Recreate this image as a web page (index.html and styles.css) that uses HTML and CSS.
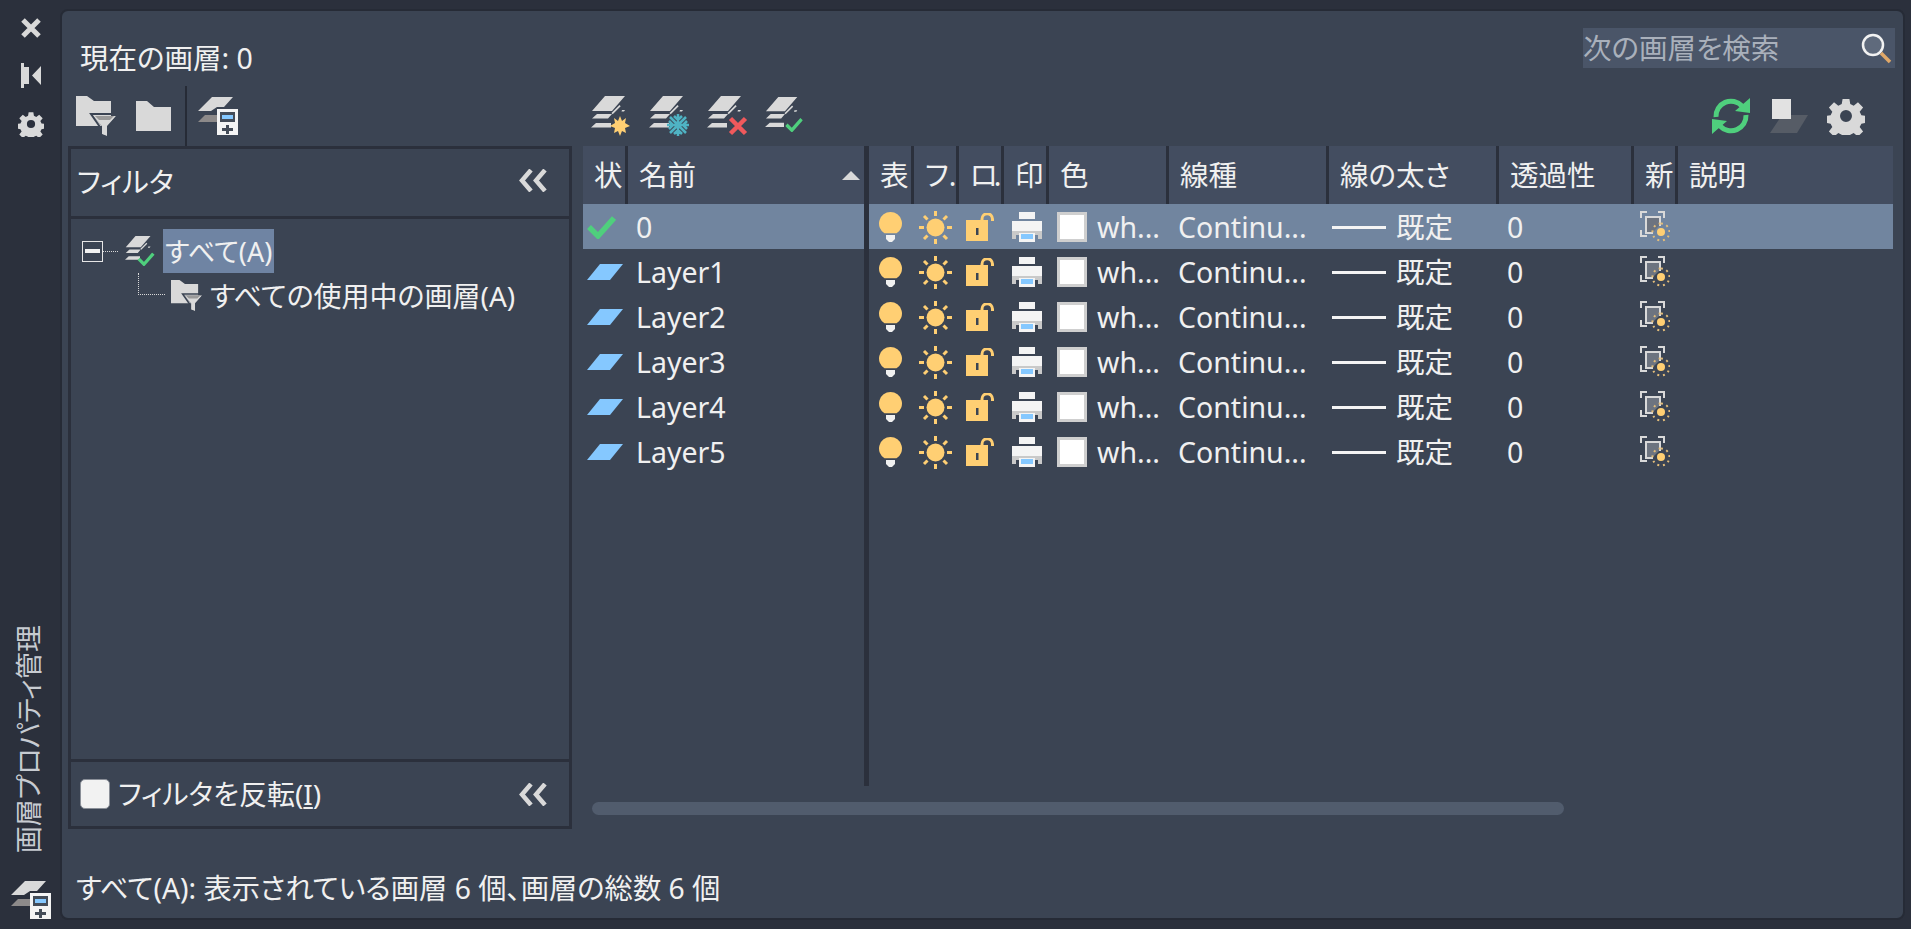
FILE: index.html
```html
<!DOCTYPE html>
<html lang="ja">
<head>
<meta charset="utf-8">
<title>画層プロパティ管理</title>
<link rel="stylesheet" href="styles.css">
</head>
<body>
<svg class="defs" width="0" height="0" aria-hidden="true">
  <defs>
    <symbol id="stack" viewBox="0 0 40 40">
      <path fill="#d9d9d9" d="M1 15 14 0h20L21 15zM1 22.500l5-4.500h15l-4 4.500zM0 31.500l5-4.500h15v4.500zM20.500 17l8-8 1.200 1.200-8 8zM31 14h3l-1 1.500h-2.500z"/>
    </symbol>
    <symbol id="sunbadge" viewBox="0 0 20 20">
      <path fill="#ffcf73" d="M10 0l2 5 4-3-1 5 5 3-5 2 1 5-4-2-2 5-2-5-4 2 1-5-5-2 5-3-1-5 4 3z"/>
    </symbol>
    <symbol id="filterfolder" viewBox="0 0 40 40">
      <path fill="#d9d9d9" d="M0 0h11l7 5h17v15H17l9 10H0z"/>
      <path fill="#d9d9d9" d="M17 20h23l-9 10v10l-5-2v-8z"/>
      <path fill="#9a9a9a" d="M19 20h19l-4 4H23z"/>
      <path fill="none" stroke="#3b4453" stroke-width="2" d="M15 18h28L33 31v11l-9-3v-8z"/>
    </symbol>
    <symbol id="folder" viewBox="0 0 35 30">
      <path fill="#d9d9d9" d="M0 0h11l7 6h17v24H0z"/>
    </symbol>
    <symbol id="statemgr" viewBox="0 0 40 38">
      <path fill="#d9d9d9" d="M0 14 14 0h21l-9 10H19l-6 4z"/>
      <path fill="#8d8a8a" d="M0 25l7-7h12v7z"/>
      <rect x="19" y="12" width="21" height="26" fill="#f4f4f4"/>
      <rect x="22" y="15" width="15" height="10" fill="#444c58"/>
      <rect x="24" y="18" width="11" height="4" fill="#85c8ff"/>
      <path fill="#444c58" d="M28 28h3v3h4v3h-4v3h-3v-3h-4v-3h4z"/>
    </symbol>
    <symbol id="gear" viewBox="0 0 40 40">
      <path fill="#d9d9d9" fill-rule="evenodd" d="M16 0h8l1 6 4 2 5-4 6 6-4 5 2 4 6 1v8l-6 1-2 4 4 5-6 6-5-4-4 2-1 6h-8l-1-6-4-2-5 4-6-6 4-5-2-4-6-1v-8l6-1 2-4-4-5 6-6 5 4 4-2zM20 13a7 7 0 1 0 0 14 7 7 0 0 0 0-14z" transform="translate(2 2) scale(.9)"/>
    </symbol>
    <symbol id="chev" viewBox="0 0 30 23">
      <path fill="none" stroke="#d9d9d9" stroke-width="4.500" d="M13 1 4 11.500l9 10.500M27 1l-9 10.500 9 10.500"/>
    </symbol>
    <symbol id="check" viewBox="0 0 29 23">
      <path fill="none" stroke="#4fcf7d" stroke-width="5.500" d="M2 11l9 9L27 2"/>
    </symbol>
    <symbol id="para" viewBox="0 0 36 16">
      <path fill="#85c8ff" d="M0 16 13 0h23L23 16z"/>
    </symbol>
    <symbol id="bulb" viewBox="0 0 23 30">
      <path fill="#ffcf73" d="M11.500 0a11.500 11.500 0 0 1 6 21.300H5.500A11.500 11.500 0 0 1 11.500 0z"/>
      <path fill="#f0f0f0" d="M7 23h9v4l-3 3h-3l-3-3z"/>
    </symbol>
    <symbol id="sun" viewBox="0 0 33 33">
      <circle cx="16.500" cy="16.500" r="9" fill="#ffcf73"/>
      <path stroke="#ffcf73" stroke-width="3" fill="none" d="M16.500 0v5M16.500 28v5M0 16.500h5M28 16.500h5M5 5l3.500 3.500M24.500 24.500 28 28M5 28l3.500-3.500M24.500 8.500 28 5"/>
    </symbol>
    <symbol id="lock" viewBox="0 0 28 28">
      <path fill="#ffcf73" d="M0 7h22v21H0z"/>
      <rect x="10" y="15" width="2.500" height="7" fill="#3b4453"/>
      <path fill="none" stroke="#ffcf73" stroke-width="3" d="M16 10V6a5 5 0 0 1 10.500 0v2"/>
    </symbol>
    <symbol id="printer" viewBox="0 0 30 30">
      <path fill="#f4f4f4" d="M7 0h16v7H7zM0 9h30v10H0z"/>
      <path fill="#c9c9c9" d="M0 19h30v8h-4v-4H4v4H0z"/>
      <path fill="#f4f4f4" d="M7 21h16v9H7z"/>
      <path fill="#85c8ff" d="M9 22h12v5H9z"/>
    </symbol>
    <symbol id="fresh" viewBox="0 0 30 32">
      <path fill="none" stroke="#d9d9d9" stroke-width="2" d="M1 7V1h6M18 1h6v6M1 19v6h6"/>
      <path fill="#d9d9d9" d="M5 5h16v10h-2V7H7v14h6v2H5z"/>
      <path fill="#6d7480" d="M7 7h12v8l-6 6H7z"/>
      <circle cx="21" cy="21" r="4" fill="#ffcf73"/>
      <path stroke="#e3bd7a" stroke-width="2" stroke-dasharray="2 3.600" fill="none" d="M21 12.500a8.500 8.500 0 1 1-.1 0z"/>
    </symbol>
  </defs>
</svg>

<div class="app">
  <aside class="side">
    <svg class="side-close" width="20" height="20" viewBox="0 0 20 20"><path stroke="#d9d9d9" stroke-width="5" d="M2 2l16 16M18 2 2 18"/></svg>
    <svg class="side-pin" width="20" height="25" viewBox="0 0 20 25"><path fill="#d9d9d9" d="M0 0h3v25H0zM3 4h5v17H3zM20 3v19L11 12.500z"/></svg>
    <svg class="side-gear" width="26" height="26"><use href="#gear"/></svg>
    <div class="side-title">画層プロパティ管理</div>
    <svg class="side-icon" width="40" height="40" viewBox="0 0 40 38"><use href="#statemgr"/></svg>
  </aside>

  <main class="main">
    <header class="top">
      <div class="current">現在の画層: 0</div>
      <div class="search">
        <span>次の画層を検索</span>
        <svg width="30" height="30" viewBox="0 0 30 30"><circle cx="12" cy="12" r="10" fill="#5f6a7c" stroke="#f2f2f2" stroke-width="2.500"/><path stroke="#e0a868" stroke-width="3.500" d="M20 20l9 9"/></svg>
      </div>
    </header>

    <div class="tools">
      <div class="tools-left">
        <svg class="t1" width="40" height="40"><use href="#filterfolder"/></svg>
        <svg class="t2" width="35" height="30"><use href="#folder"/></svg>
        <i class="tool-sep"></i>
        <svg class="t3" width="40" height="38"><use href="#statemgr"/></svg>
      </div>
      <div class="tools-mid">
        <span class="badged"><svg width="40" height="40"><use href="#stack"/></svg><svg class="badge b-sun" width="20" height="20"><use href="#sunbadge"/></svg></span>
        <span class="badged"><svg width="40" height="40"><use href="#stack"/></svg><svg class="badge b-snow" width="22" height="22" viewBox="0 0 22 22"><path stroke="#4fb3c4" stroke-width="2.500" fill="none" d="M11 0v22M0 11h22M3 3l16 16M19 3 3 19M7 2l4 4 4-4M7 20l4-4 4 4M2 7l4 4-4 4M20 7l-4 4 4 4"/></svg></span>
        <span class="badged"><svg width="40" height="40"><use href="#stack"/></svg><svg class="badge b-x" width="18" height="18" viewBox="0 0 18 18"><path stroke="#f0595c" stroke-width="4.500" d="M1.500 1.500l15 15M16.500 1.500l-15 15"/></svg></span>
        <span class="badged"><svg width="38" height="40"><use href="#stack"/></svg><svg class="badge b-ok" width="18" height="14" viewBox="0 0 29 23"><use href="#check"/></svg></span>
      </div>
      <div class="tools-right">
        <svg width="40" height="36" viewBox="0 0 40 36"><path fill="none" stroke="#4fcf7d" stroke-width="5" d="M5 19A15 15 0 0 1 31 8M35 17A15 15 0 0 1 9 28"/><path fill="#4fcf7d" d="M24 13 39 15V0zM16 23 1 21v15z"/></svg>
        <svg width="38" height="34" viewBox="0 0 38 34"><path fill="#565c66" d="M12 16h26L27 34H0z"/><rect x="2" y="0" width="19" height="20" fill="#e2e2e2"/></svg>
        <svg width="38" height="38"><use href="#gear"/></svg>
      </div>
    </div>

    <div class="body">
      <section class="filters">
        <div class="filters-head"><span>フィルタ</span><svg width="30" height="23"><use href="#chev"/></svg></div>
        <div class="tree">
          <div class="tree-root">
            <span class="minus"><i></i></span>
            <i class="dots-h"></i>
            <svg class="tree-stack" width="30" height="30" viewBox="0 0 40 40"><use href="#stack"/><g transform="translate(16 22)"><use href="#check" width="24" height="18"/></g></svg>
            <span class="tree-sel">すべて(A)</span>
          </div>
          <div class="tree-child">
            <i class="dots-l"></i>
            <svg width="31" height="31"><use href="#filterfolder"/></svg>
            <span>すべての使用中の画層(A)</span>
          </div>
        </div>
        <div class="filters-foot">
          <span class="box"></span>
          <span class="invert">フィルタを反転(<u>I</u>)</span>
          <svg width="30" height="23"><use href="#chev"/></svg>
        </div>
      </section>

      <section class="layers">
        <div class="tables">
          <div class="names">
            <div class="head names-grid">
              <div>状</div>
              <div class="sorted">名前<i class="tri"></i></div>
            </div>
            <div class="row sel names-grid"><div class="c"><svg width="29" height="23"><use href="#check"/></svg></div><div class="nm">0</div></div>
            <div class="row names-grid"><div class="c"><svg width="36" height="16"><use href="#para"/></svg></div><div class="nm">Layer1</div></div>
            <div class="row names-grid"><div class="c"><svg width="36" height="16"><use href="#para"/></svg></div><div class="nm">Layer2</div></div>
            <div class="row names-grid"><div class="c"><svg width="36" height="16"><use href="#para"/></svg></div><div class="nm">Layer3</div></div>
            <div class="row names-grid"><div class="c"><svg width="36" height="16"><use href="#para"/></svg></div><div class="nm">Layer4</div></div>
            <div class="row names-grid"><div class="c"><svg width="36" height="16"><use href="#para"/></svg></div><div class="nm">Layer5</div></div>
          </div>
          <div class="cols">
            <div class="head cols-grid">
              <div>表</div><div>フ.</div><div class="h-ro">ロ.</div><div>印</div><div>色</div><div>線種</div><div>線の太さ</div><div>透過性</div><div>新</div><div>説明</div>
            </div>
            <div class="row sel cols-grid">
              <div class="c"><svg width="23" height="30"><use href="#bulb"/></svg></div><div class="c"><svg width="33" height="33"><use href="#sun"/></svg></div><div class="c"><svg width="28" height="28"><use href="#lock"/></svg></div><div class="c"><svg width="30" height="30"><use href="#printer"/></svg></div>
              <div class="clr"><i class="sw"></i>wh...</div><div class="lt">Continu...</div><div class="lw"><i class="ln"></i>既定</div><div class="tr">0</div><div class="c"><svg width="30" height="32"><use href="#fresh"/></svg></div><div></div>
            </div>
            <div class="row cols-grid">
              <div class="c"><svg width="23" height="30"><use href="#bulb"/></svg></div><div class="c"><svg width="33" height="33"><use href="#sun"/></svg></div><div class="c"><svg width="28" height="28"><use href="#lock"/></svg></div><div class="c"><svg width="30" height="30"><use href="#printer"/></svg></div>
              <div class="clr"><i class="sw"></i>wh...</div><div class="lt">Continu...</div><div class="lw"><i class="ln"></i>既定</div><div class="tr">0</div><div class="c"><svg width="30" height="32"><use href="#fresh"/></svg></div><div></div>
            </div>
            <div class="row cols-grid">
              <div class="c"><svg width="23" height="30"><use href="#bulb"/></svg></div><div class="c"><svg width="33" height="33"><use href="#sun"/></svg></div><div class="c"><svg width="28" height="28"><use href="#lock"/></svg></div><div class="c"><svg width="30" height="30"><use href="#printer"/></svg></div>
              <div class="clr"><i class="sw"></i>wh...</div><div class="lt">Continu...</div><div class="lw"><i class="ln"></i>既定</div><div class="tr">0</div><div class="c"><svg width="30" height="32"><use href="#fresh"/></svg></div><div></div>
            </div>
            <div class="row cols-grid">
              <div class="c"><svg width="23" height="30"><use href="#bulb"/></svg></div><div class="c"><svg width="33" height="33"><use href="#sun"/></svg></div><div class="c"><svg width="28" height="28"><use href="#lock"/></svg></div><div class="c"><svg width="30" height="30"><use href="#printer"/></svg></div>
              <div class="clr"><i class="sw"></i>wh...</div><div class="lt">Continu...</div><div class="lw"><i class="ln"></i>既定</div><div class="tr">0</div><div class="c"><svg width="30" height="32"><use href="#fresh"/></svg></div><div></div>
            </div>
            <div class="row cols-grid">
              <div class="c"><svg width="23" height="30"><use href="#bulb"/></svg></div><div class="c"><svg width="33" height="33"><use href="#sun"/></svg></div><div class="c"><svg width="28" height="28"><use href="#lock"/></svg></div><div class="c"><svg width="30" height="30"><use href="#printer"/></svg></div>
              <div class="clr"><i class="sw"></i>wh...</div><div class="lt">Continu...</div><div class="lw"><i class="ln"></i>既定</div><div class="tr">0</div><div class="c"><svg width="30" height="32"><use href="#fresh"/></svg></div><div></div>
            </div>
            <div class="row cols-grid">
              <div class="c"><svg width="23" height="30"><use href="#bulb"/></svg></div><div class="c"><svg width="33" height="33"><use href="#sun"/></svg></div><div class="c"><svg width="28" height="28"><use href="#lock"/></svg></div><div class="c"><svg width="30" height="30"><use href="#printer"/></svg></div>
              <div class="clr"><i class="sw"></i>wh...</div><div class="lt">Continu...</div><div class="lw"><i class="ln"></i>既定</div><div class="tr">0</div><div class="c"><svg width="30" height="32"><use href="#fresh"/></svg></div><div></div>
            </div>
          </div>
        </div>
        <div class="hscroll"><i></i></div>
      </section>
    </div>

    <footer class="status">すべて(A): 表示されている画層 6 個、画層の総数 6 個</footer>
  </main>
</div>
</body>
</html>
```

FILE: styles.css
```css
* { box-sizing: border-box; }
html, body { margin: 0; height: 100%; }
body {
  background: #2b303c;
  color: #f0f0f0;
  font-family: "Noto Sans", "Noto Sans CJK JP", sans-serif;
  font-size: 28.500px;
  font-feature-settings: "palt";
  overflow: hidden;
}
svg { display: block; flex: none; overflow: visible; }
i { display: block; font-style: normal; }
.defs { position: absolute; }

.app { display: flex; height: 929px; }

.side {
  width: 60px;
  flex: none;
  display: flex;
  flex-direction: column;
  align-items: center;
  padding: 18px 0 9px 2px;
}
.side-pin { margin-top: 25px; }
.side-gear { margin-top: 23px; }
.side-title {
  margin-top: auto;
  margin-right: 4px;
  writing-mode: vertical-rl;
  text-orientation: sideways;
  transform: rotate(180deg);
  color: #c7cbd1;
  font-size: 27px;
  line-height: 30px;
  white-space: nowrap;
}
.side-icon { margin-top: 27px; }

.main {
  flex: 1;
  margin: 9px 6px 9px 0;
  border: 2px solid #262b36;
  border-radius: 8px;
  background: #3b4453;
  display: flex;
  flex-direction: column;
}

.top {
  height: 75px;
  flex: none;
  display: flex;
  justify-content: space-between;
  padding: 17px 8px 0 18px;
}
.current { margin-top: 11px; line-height: 38px; }
.search {
  width: 312px;
  height: 40px;
  background: #4a5568;
  color: #a9b0bb;
  display: flex;
  align-items: center;
  justify-content: space-between;
  font-size: 28.500px;
  line-height: 40px;
}
.search svg { margin-right: 4px; }

.tools { height: 60px; flex: none; display: flex; align-items: center; }
.tools-left { width: 521px; display: flex; align-items: center; height: 100%; padding-left: 14px; }
.t2 { margin-left: 20px; }
.tool-sep { width: 2px; height: 60px; background: #262b36; margin-left: 14px; }
.t3 { margin-left: 11px; }
.tools-mid { display: flex; gap: 18px; margin-left: 8px; }
.badged { position: relative; display: block; width: 40px; height: 40px; }
.badge { position: absolute; }
.b-sun { right: 1px; bottom: 0; }
.b-snow { right: 0; bottom: 0; }
.b-x { right: 0; bottom: 1px; }
.b-ok { right: 2px; bottom: 4px; }
.tools-right { margin-left: auto; margin-right: 38px; display: flex; align-items: center; gap: 19px; }

.body { height: 683px; flex: none; display: flex; padding-left: 6px; padding-right: 10px; }

.filters {
  width: 504px;
  flex: none;
  border: 3px solid #2b303c;
  display: flex;
  flex-direction: column;
}
.filters-head {
  height: 70px;
  flex: none;
  display: flex;
  align-items: center;
  justify-content: space-between;
  padding: 0 21px 5px 6px;
  border-bottom: 3px solid #2b303c;
}
.tree { flex: 1; padding: 10px 0 0 11px; }
.tree-root { display: flex; align-items: center; height: 44px; }
.minus {
  width: 21px;
  height: 21px;
  border: 1px solid #e6e6e6;
  display: flex;
  align-items: center;
  justify-content: center;
}
.minus i { width: 15px; height: 4px; background: #f2f2f2; }
.dots-h { width: 15px; border-top: 1px dotted #d9d9d9; }
.tree-stack { margin: 0 8px 0 7px; }
.tree-sel {
  background: #6f84a3;
  width: 111px;
  height: 44px;
  font-size: 27px;
  line-height: 45px;
  padding-left: 2px;
  white-space: nowrap;
}
.tree-child { display: flex; align-items: center; height: 44px; margin-left: 56px; font-size: 28px; }
.tree-child .dots-l {
  width: 27px;
  height: 22px;
  margin-top: -22px;
  border-left: 1px dotted #d9d9d9;
  border-bottom: 1px dotted #d9d9d9;
}
.tree-child svg { margin: 0 8px 0 6px; }
.filters-foot {
  height: 67px;
  flex: none;
  display: flex;
  align-items: center;
  padding: 0 21px 0 9px;
  border-top: 3px solid #2b303c;
}
.box {
  width: 30px;
  height: 30px;
  border-radius: 5px;
  background: #f2f2f2;
  border: 1px solid #8a8f98;
}
.invert { margin-left: 8px; margin-right: auto; padding-bottom: 3px; font-size: 28px; }

.layers { flex: 1; margin-left: 11px; display: flex; flex-direction: column; }
.tables { height: 640px; flex: none; display: flex; gap: 5px; }
.names { width: 281px; flex: none; }
.cols { flex: 1; box-shadow: -5px 0 0 #2b303c; }

.names-grid { display: grid; grid-template-columns: 42px 1fr; }
.cols-grid { display: grid; grid-template-columns: 42px 42px 42px 42px 117px 157px 167px 132px 41px 1fr; }
.head { height: 58px; column-gap: 3px; background: #2b303c; }
.head > div {
  background: #434d60;
  padding-left: 11px;
  line-height: 58px;
  white-space: nowrap;
}
.head > .h-ro { letter-spacing: -4px; }
.sorted { position: relative; }
.tri {
  position: absolute;
  right: 4px;
  top: 25px;
  border-left: 9px solid transparent;
  border-right: 9px solid transparent;
  border-bottom: 9px solid #d9d9d9;
}
.row { height: 45px; column-gap: 3px; align-items: center; white-space: nowrap; }
.row.sel { background: #71859f; }
.row > div { min-width: 0; line-height: 46px; }
.c { display: flex; align-items: center; justify-content: center; }
.cols .row > .c:nth-child(4) { padding-left: 4px; }
.names .c { justify-content: flex-start; padding-left: 4px; }
.nm { padding-left: 8px; }
.clr { display: flex; align-items: center; padding-left: 8px; gap: 10px; }
.sw { width: 30px; height: 30px; background: #fff; border: 3px solid #cfcfcf; }
.lt { padding-left: 9px; }
.lw { display: flex; align-items: center; gap: 10px; padding-left: 3px; }
.ln { width: 54px; height: 3px; background: #f4f4f4; }
.tr { padding-left: 8px; }

.hscroll { padding: 16px 0 0 9px; }
.hscroll i { width: 972px; height: 13px; border-radius: 7px; background: #515c6d; }

.status { flex: 1; padding: 39px 0 0 14px; line-height: 40px; font-size: 28.300px; }
```
